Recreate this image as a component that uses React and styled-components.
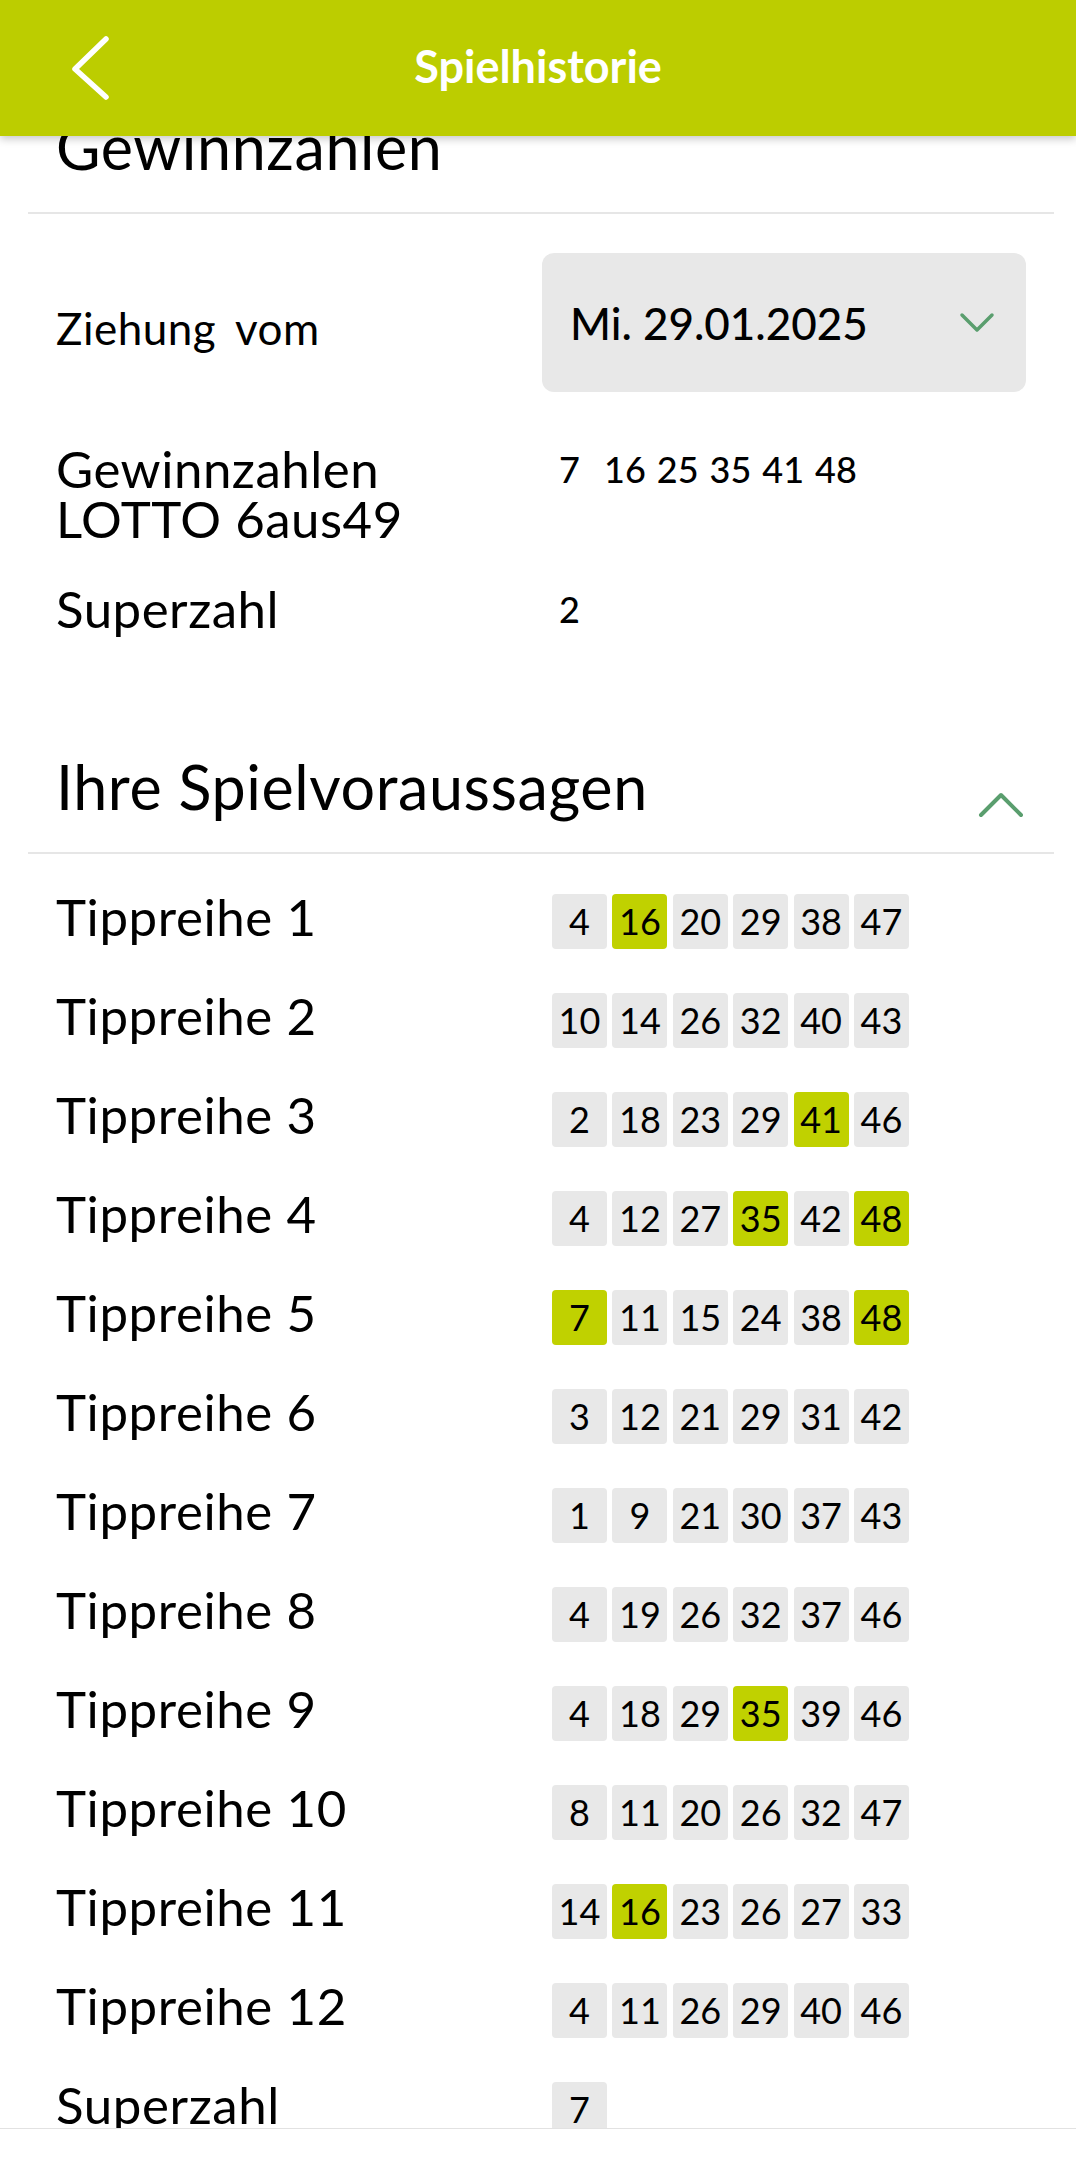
import React from 'react'
import styled, { createGlobalStyle } from 'styled-components'

const WINNING = [7, 16, 25, 35, 41, 48]
const SUPERZAHL = 2

const TIPS = [
	[4, 16, 20, 29, 38, 47],
	[10, 14, 26, 32, 40, 43],
	[2, 18, 23, 29, 41, 46],
	[4, 12, 27, 35, 42, 48],
	[7, 11, 15, 24, 38, 48],
	[3, 12, 21, 29, 31, 42],
	[1, 9, 21, 30, 37, 43],
	[4, 19, 26, 32, 37, 46],
	[4, 18, 29, 35, 39, 46],
	[8, 11, 20, 26, 32, 47],
	[14, 16, 23, 26, 27, 33],
	[4, 11, 26, 29, 40, 46],
]

const GlobalStyle = createGlobalStyle`
	html, body {
		margin: 0;
		padding: 0;
		background: #fff;
	}
	body {
		font-family: Lato, 'Open Sans', sans-serif;
		color: #000;
	}
	* {
		box-sizing: border-box;
	}
`

const Screen = styled.div`
	height: 2167px;
	display: flex;
	flex-direction: column;
	overflow: hidden;
`

const Header = styled.header`
	position: relative;
	z-index: 2;
	flex: 0 0 136px;
	display: grid;
	grid-template-columns: 1fr auto 1fr;
	align-items: center;
	background: #bccd00;
	box-shadow: 0 3px 8px rgba(0, 0, 0, 0.22);
`

const BackButton = styled.button`
	justify-self: start;
	margin-left: 68px;
	padding: 0;
	border: none;
	background: none;
	display: flex;
`

const Title = styled.h1`
	margin: 0;
	padding-bottom: 4px;
	font-size: 45px;
	font-weight: 700;
	line-height: 1;
	color: #fff;
`

const Scroller = styled.main`
	flex: 1;
	overflow: hidden;
`

const Content = styled.div`
	margin-top: -19px;
`

const Section = styled.section`
	margin: ${(p) => (p.$gap ? `${p.$gap}px` : '0')} 22px 0 28px;
`

const SectionHead = styled.div`
	display: flex;
	align-items: flex-end;
	justify-content: space-between;
	padding: 0 30px 35px 28px;
	border-bottom: 2px solid #e6e6e6;
`

const Heading = styled.h2`
	margin: 0;
	font-size: 61px;
	font-weight: 400;
	line-height: 60px;
	letter-spacing: 0.6px;
`

const Toggle = styled.svg`
	margin-bottom: -2px;
`

const InfoRow = styled.div`
	display: grid;
	grid-template-columns: 486px 1fr;
	align-items: ${(p) => (p.$center ? 'center' : 'start')};
	margin-top: ${(p) => p.$top}px;
	padding: 0 28px;
`

const Label = styled.div`
	font-size: ${(p) => (p.$small ? 44 : 51)}px;
	line-height: ${(p) => (p.$small ? '44px' : '50px')};
	padding-top: ${(p) => (p.$small ? 11 : 0)}px;
	letter-spacing: 0.5px;
	word-spacing: ${(p) => (p.$small ? 8 : 0)}px;
`

const DateSelect = styled.div`
	height: 139px;
	display: flex;
	align-items: center;
	justify-content: space-between;
	padding: 0 31px 0 28px;
	background: #e8e8e8;
	border-radius: 12px;
	font-size: 44px;
	font-weight: 500;
	line-height: 1;
`

const Values = styled.div`
	display: flex;
	padding-left: 17px;
	font-size: 36px;
	font-weight: 500;
	line-height: 50px;
`

const Value = styled.span`
	min-width: ${(p) => (p.$wide ? 34 : 0)}px;
	margin-right: 11px;
`

const TipList = styled.div`
	padding-top: 18px;
`

const TipRow = styled.div`
	height: 99px;
	display: grid;
	grid-template-columns: 496px 1fr;
	align-items: center;
	padding-left: 28px;
`

const TipLabel = styled.div`
	font-size: 51px;
	line-height: 50px;
	letter-spacing: 0.6px;
	padding-bottom: 10px;
`

const Balls = styled.div`
	display: flex;
	gap: 5.4px;
`

const Ball = styled.div`
	width: 55px;
	height: 55px;
	border-radius: 4px;
	background: ${(p) => (p.$hit ? '#c0d100' : '#e8e8e8')};
	font-size: 36px;
	line-height: 55px;
	text-align: center;
`

const Footer = styled.footer`
	flex: 0 0 39px;
	border-top: 1px solid #e2e2e2;
	background: #fff;
`

const Chevron = ({ dir }) =>
	dir === 'down' ? (
		<svg width='36' height='22' viewBox='0 0 36 22'>
			<path d='M3 3 L18 18 L33 3' fill='none' stroke='#5a9e6e' strokeWidth='3.5' strokeLinecap='round' strokeLinejoin='round' />
		</svg>
	) : (
		<Toggle width='46' height='28' viewBox='0 0 46 28'>
			<path d='M3 24 L23 4 L43 24' fill='none' stroke='#5a9e6e' strokeWidth='4' strokeLinecap='round' strokeLinejoin='round' />
		</Toggle>
	)

const App = () => {
	return (
		<Screen>
			<GlobalStyle />
			<Header>
				<BackButton aria-label='Zurück'>
					<svg width='44' height='68' viewBox='0 0 44 68'>
						<path d='M38 5 L7 35 L38 63' fill='none' stroke='#fff' strokeWidth='5.5' strokeLinecap='round' strokeLinejoin='round' />
					</svg>
				</BackButton>
				<Title>Spielhistorie</Title>
				<div />
			</Header>

			<Scroller>
				<Content>
					<Section>
						<SectionHead>
							<Heading>Gewinnzahlen</Heading>
						</SectionHead>
						<InfoRow $top={39} $center>
							<Label $small>Ziehung vom</Label>
							<DateSelect>
								<span>Mi. 29.01.2025</span>
								<Chevron dir='down' />
							</DateSelect>
						</InfoRow>
						<InfoRow $top={52}>
							<Label>
								Gewinnzahlen
								<br />
								LOTTO 6aus49
							</Label>
							<Values>
								{WINNING.map((n, i) => (
									<Value key={n} $wide={i === 0}>
										{n}
									</Value>
								))}
							</Values>
						</InfoRow>
						<InfoRow $top={40}>
							<Label>Superzahl</Label>
							<Values>
								<Value>{SUPERZAHL}</Value>
							</Values>
						</InfoRow>
					</Section>

					<Section $gap={123}>
						<SectionHead>
							<Heading>Ihre Spielvoraussagen</Heading>
							<Chevron dir='up' />
						</SectionHead>
						<TipList>
							{TIPS.map((tip, i) => (
								<TipRow key={i}>
									<TipLabel>Tippreihe {i + 1}</TipLabel>
									<Balls>
										{tip.map((n) => (
											<Ball key={n} $hit={WINNING.includes(n)}>
												{n}
											</Ball>
										))}
									</Balls>
								</TipRow>
							))}
							<TipRow>
								<TipLabel>Superzahl</TipLabel>
								<Balls>
									<Ball $hit={false}>7</Ball>
								</Balls>
							</TipRow>
						</TipList>
					</Section>
				</Content>
			</Scroller>

			<Footer />
		</Screen>
	)
}

export default App
